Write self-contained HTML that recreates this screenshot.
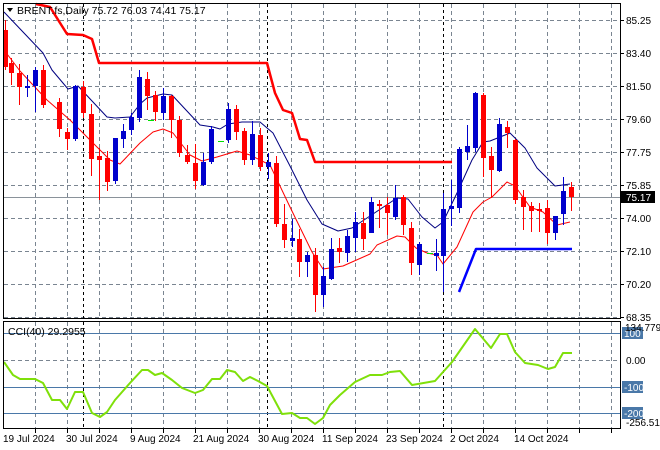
<!DOCTYPE html>
<html><head><meta charset="utf-8"><style>
body{margin:0;background:#fff;width:660px;height:450px;overflow:hidden}
svg{display:block}
text{font-family:"Liberation Sans","DejaVu Sans",sans-serif;font-size:10px;fill:#000}
</style></head><body>
<svg id="s" width="660" height="450" xmlns="http://www.w3.org/2000/svg">
<rect width="660" height="450" fill="#fff"/>
<g id="grid"></g>
<g id="lines"></g>
<g id="candles"></g>
<rect x="3.5" y="3.5" width="617" height="315" fill="none" stroke="#000"/>
<rect x="3.5" y="321.5" width="617" height="107" fill="none" stroke="#000"/>
<g id="labels"></g>
<text x="17" y="14" style="font-size:10.5px">BRENT.fs,Daily   75.72 76.03 74.41 75.17</text>
<path d="M7 8 L13 8 L10 12 Z" fill="#000"/>
<text x="8" y="335" style="font-size:10.5px">CCI(40) 29.2955</text>
</svg>
<script>
var NS="http://www.w3.org/2000/svg";
function el(p,t,a,txt){var e=document.createElementNS(NS,t);for(var k in a)e.setAttribute(k,a[k]);if(txt!==undefined)e.textContent=txt;document.getElementById(p).appendChild(e);return e;}
// horizontal grid
[20,53,86,119,152,185,218,251,284,317].forEach(function(y){el('grid','line',{x1:4,x2:620,y1:y+.5,y2:y+.5,stroke:'#7a8591','stroke-dasharray':'4,3'});});
for(var x=35;x<620;x+=32){el('grid','line',{x1:x+.5,x2:x+.5,y1:4,y2:318,stroke:'#7a8591','stroke-dasharray':'4,3'});el('grid','line',{x1:x+.5,x2:x+.5,y1:322,y2:428,stroke:'#7a8591','stroke-dasharray':'4,3'});el('grid','line',{x1:x+.5,x2:x+.5,y1:429,y2:433,stroke:'#000'});}
[83,267,443].forEach(function(x){el('grid','line',{x1:x+.5,x2:x+.5,y1:4,y2:318,stroke:'#000','stroke-dasharray':'3,3'});el('grid','line',{x1:x+.5,x2:x+.5,y1:322,y2:428,stroke:'#000','stroke-dasharray':'3,3'});});
// cci levels
el('grid','line',{x1:4,x2:620,y1:360.5,y2:360.5,stroke:'#7a8591','stroke-dasharray':'4,3'});
[333,387,413].forEach(function(y){el('grid','line',{x1:4,x2:620,y1:y+.5,y2:y+.5,stroke:'#4a78a8'});});
// current price
el('grid','line',{x1:4,x2:620,y1:197.5,y2:197.5,stroke:'#8a929a'});
function pl(pts,col,w){el('lines','polyline',{points:pts,fill:'none',stroke:col,'stroke-width':w,'stroke-linejoin':'round'});}
pl("4,12 43,53 52,70 68,89 78,86 107,117 115,118 130,117 140,104 147,98 163,94 172,95 200,125 213,127 220,129 228,124 242,122 260,122 273,133 290,166 307,200 322,224 338,231 352,228 373,214 397,198 408,199 422,217 435,228 443,222 457,193 472,160 483,142 490,141 510,133 525,148 537,168 555,186 570,184",'#000080',1);
pl("4,50 20,71 47,100 70,120 82,132 97,147 110,160 120,164 140,143 153,132 163,129 173,133 190,155 202,161 217,157 237,151 250,155 270,165 290,207 312,252 323,269 343,266 370,254 377,245 397,236 405,237 416,248 427,253 437,255 443,264 457,247 473,212 483,202 492,197 507,182 515,186 530,207 543,212 557,225 570,222",'#ff0000',1);
pl("36,4 50,7 67,34 83,35 92,39 99,63 267,63 275,93 283,110 292,113 300,139 307,140 315,162 452,162",'#ff0000',2.5);
pl("459,292 476,249 572,249",'#0000ff',2.5);
pl("4,362 13,375 20,379 35,379 43,383 52,400 60,400 67,409 75,392 83,392 92,413 100,417 107,412 115,400 130,383 142,370 148,370 155,375 162,373 172,380 182,388 195,393 203,390 212,379 220,379 227,370 235,372 243,381 250,377 258,381 267,386 282,414 292,413 300,418 307,418 315,424 323,418 330,405 340,395 355,382 370,375 382,375 390,372 400,371 412,385 435,381 452,362 475,329 491,348 500,334 507,334 515,352 525,363 538,365 548,369 555,367 563,353 572,353",'#7fe00a',2);
el('lines','line',{x1:148,x2:154,y1:120.5,y2:120.5,stroke:'#00e000'});
el('lines','line',{x1:218,x2:224,y1:141.5,y2:141.5,stroke:'#00e000'});
el('lines','line',{x1:427,x2:433,y1:253.5,y2:253.5,stroke:'#00e000'});
// candles: x, dir(1 blue up,0 red), bodyTop, bodyBot, wickTop, wickBot
var C=[[5,0,30,67,20,70],[11,0,63,73,58,85],[19,0,73,87,64,105],[27,1,86,88,75,97],[35,1,70,86,67,112],[43,0,70,105,65,108],[59,0,102,129,98,137],[67,0,132,139,128,150],[75,1,86,139,85,141],[83,0,87,113,81,118],[91,0,114,159,104,176],[99,0,156,160,148,200],[107,0,158,182,151,191],[115,1,138,181,138,184],[123,1,131,139,124,148],[131,1,117,130,113,135],[139,1,77,118,70,122],[147,0,79,96,72,110],[155,0,95,112,91,121],[163,1,96,113,88,120],[171,0,96,120,95,138],[179,0,120,153,116,157],[187,0,155,162,145,164],[195,0,163,181,144,189],[203,1,162,185,153,186],[211,1,129,162,126,164],[228,1,109,140,103,143],[236,0,109,132,105,140],[244,0,131,160,128,165],[252,1,134,160,121,165],[260,0,135,167,128,171],[268,1,162,167,153,179],[276,0,163,224,156,227],[284,0,224,240,204,248],[292,1,238,241,219,247],[299,0,239,262,229,277],[307,1,255,262,252,277],[315,0,255,295,248,312],[323,1,276,295,267,307],[331,1,249,279,238,280],[339,0,248,252,238,263],[347,1,236,253,230,262],[355,1,222,238,212,252],[363,0,223,239,212,250],[371,1,202,233,197,233],[379,0,204,206,200,228],[387,0,205,213,197,235],[395,1,198,217,185,220],[403,0,197,225,195,235],[411,0,228,263,222,275],[419,1,244,265,242,275],[436,1,253,256,239,271],[443,1,209,256,193,292],[451,1,206,209,180,226],[459,1,149,208,147,213],[467,1,146,152,125,160],[475,1,93,148,92,152],[483,0,95,158,93,177],[491,0,156,170,147,198],[499,1,124,171,118,172],[507,0,127,133,121,148],[515,0,140,200,139,204],[523,0,197,207,190,230],[531,0,206,211,202,232],[539,0,209,211,203,232],[547,0,208,233,200,244],[555,1,216,233,216,240],[563,1,191,214,177,225],[571,0,187,197,182,211]];
C.forEach(function(c){var col=c[1]?'#0000cc':'#ff0000';el('candles','line',{x1:c[0]+.5,x2:c[0]+.5,y1:c[4],y2:c[5],stroke:col});el('candles','rect',{x:c[0]-2,y:c[2],width:5,height:Math.max(1,c[3]-c[2]),fill:col});});
// price labels
[[20,"85.25"],[53,"83.40"],[86,"81.50"],[119,"79.60"],[152,"77.75"],[185,"75.85"],[218,"74.00"],[251,"72.10"],[284,"70.20"],[317,"68.35"]].forEach(function(p){el('labels','line',{x1:620,x2:624,y1:p[0]+.5,y2:p[0]+.5,stroke:'#000'});el('labels','text',{x:626,y:p[0]+4},p[1]);});
el('labels','rect',{x:621,y:191,width:34,height:12,fill:'#000'});
el('labels','text',{x:626,y:201,style:'fill:#fff'},"75.17");
[[333,"100"],[387,"-100"],[413,"-200"]].forEach(function(p){el('labels','rect',{x:622,y:p[0]-6,width:21,height:12,fill:'#4a78a8'});el('labels','text',{x:624,y:p[0]+4,style:'fill:#fff'},p[1]);});
el('labels','text',{x:625,y:331},"134.779");
el('labels','text',{x:626,y:364},"0.00");
el('labels','text',{x:626,y:426},"-256.513");
[[3,"19 Jul 2024"],[66,"30 Jul 2024"],[130,"9 Aug 2024"],[193,"21 Aug 2024"],[258,"30 Aug 2024"],[322,"11 Sep 2024"],[386,"23 Sep 2024"],[450,"2 Oct 2024"],[514,"14 Oct 2024"]].forEach(function(d){el('labels','text',{x:d[0],y:442},d[1]);});
</script>
</body></html>
